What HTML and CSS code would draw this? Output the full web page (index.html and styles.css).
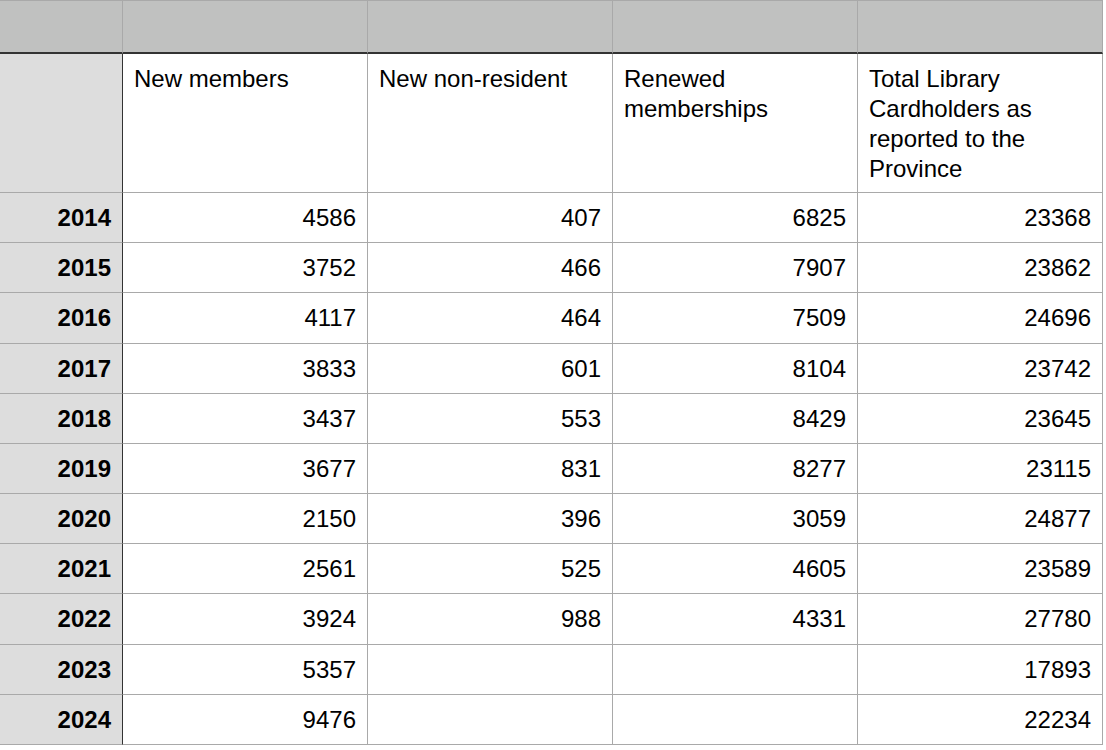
FILE: index.html
```html
<!DOCTYPE html>
<html>
<head>
<meta charset="utf-8">
<link rel="stylesheet" href="styles.css">
</head>
<body>
<div class="sheet">
  <div class="c top corner"></div>
  <div class="c top"></div>
  <div class="c top"></div>
  <div class="c top"></div>
  <div class="c top"></div>

  <div class="c rowhead"></div>
  <div class="c head">New members</div>
  <div class="c head">New non-resident</div>
  <div class="c head">Renewed<br>memberships</div>
  <div class="c head">Total Library<br>Cardholders as<br>reported to the<br>Province</div>

  <div class="c rowhead year">2014</div><div class="c num">4586</div><div class="c num">407</div><div class="c num">6825</div><div class="c num">23368</div>
  <div class="c rowhead year">2015</div><div class="c num">3752</div><div class="c num">466</div><div class="c num">7907</div><div class="c num">23862</div>
  <div class="c rowhead year">2016</div><div class="c num">4117</div><div class="c num">464</div><div class="c num">7509</div><div class="c num">24696</div>
  <div class="c rowhead year">2017</div><div class="c num">3833</div><div class="c num">601</div><div class="c num">8104</div><div class="c num">23742</div>
  <div class="c rowhead year">2018</div><div class="c num">3437</div><div class="c num">553</div><div class="c num">8429</div><div class="c num">23645</div>
  <div class="c rowhead year">2019</div><div class="c num">3677</div><div class="c num">831</div><div class="c num">8277</div><div class="c num">23115</div>
  <div class="c rowhead year">2020</div><div class="c num">2150</div><div class="c num">396</div><div class="c num">3059</div><div class="c num">24877</div>
  <div class="c rowhead year">2021</div><div class="c num">2561</div><div class="c num">525</div><div class="c num">4605</div><div class="c num">23589</div>
  <div class="c rowhead year">2022</div><div class="c num">3924</div><div class="c num">988</div><div class="c num">4331</div><div class="c num">27780</div>
  <div class="c rowhead year">2023</div><div class="c num">5357</div><div class="c num"></div><div class="c num"></div><div class="c num">17893</div>
  <div class="c rowhead year">2024</div><div class="c num">9476</div><div class="c num"></div><div class="c num"></div><div class="c num">22234</div>
</div>
</body>
</html>
```
FILE: styles.css
```css
html, body {
  margin: 0;
  padding: 0;
  background: #ffffff;
}
body {
  font-family: "Liberation Sans", Arial, sans-serif;
  color: #000;
}
.sheet {
  display: grid;
  grid-template-columns: 123px 245px 245px 245px 245px;
  grid-template-rows: 53px 139px repeat(11, 50.18px);
  width: 1103px;
  border-top: 1px solid #a9a9a9;
}
.c {
  box-sizing: border-box;
  border-right: 1px solid #a9a9a9;
  border-bottom: 1px solid #a9a9a9;
  font-size: 24px;
  line-height: 30px;
}
.top {
  background: #c0c1c0;
  border-bottom: 2px solid #333333;
}
.rowhead {
  background: #dddddd;
  border-right: 1px solid #333333;
}
.corner {
  border-right: 1px solid #a9a9a9;
}
.head {
  padding: 10px 11px 0 11px;
}
.num {
  display: flex;
  align-items: center;
  justify-content: flex-end;
  padding: 1px 11px 0 11px;
}
.year {
  display: flex;
  align-items: center;
  justify-content: flex-end;
  padding: 1px 11px 0 11px;
  font-weight: bold;
}
```
